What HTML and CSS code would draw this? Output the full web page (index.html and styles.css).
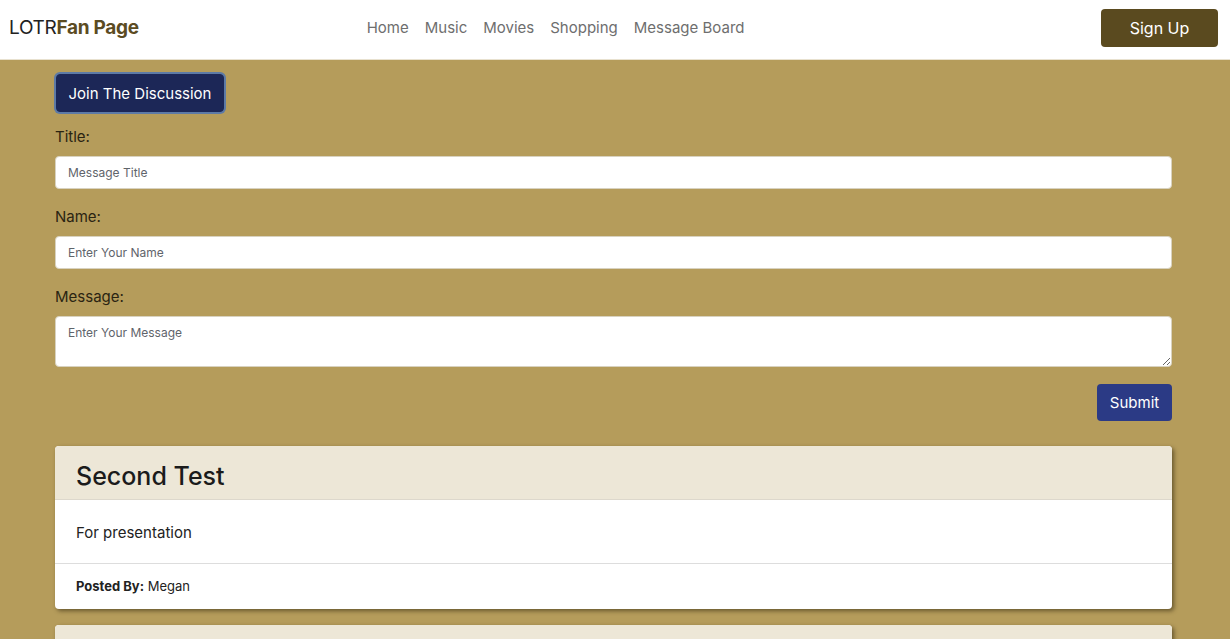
FILE: index.html
```html
<!DOCTYPE html>
<html>
<head>
<meta charset="utf-8">
<link rel="stylesheet" href="styles.css">
</head>
<body>
<nav class="navbar">
  <a class="brand">LOTR<b>Fan Page</b></a>
  <ul class="nav-links">
    <li>Home</li>
    <li>Music</li>
    <li>Movies</li>
    <li>Shopping</li>
    <li>Message Board</li>
  </ul>
  <button class="signup">Sign Up</button>
</nav>
<main class="container">
  <button class="join">Join The Discussion</button>
  <form class="form">
    <label class="label">Title:</label>
    <input class="field" type="text" placeholder="Message Title">
    <label class="label">Name:</label>
    <input class="field" type="text" placeholder="Enter Your Name">
    <label class="label">Message:</label>
    <textarea class="field area" placeholder="Enter Your Message"></textarea>
    <div class="actions"><button type="button" class="submit">Submit</button></div>
  </form>
  <div class="card">
    <div class="card-header">Second Test</div>
    <div class="card-body">For presentation</div>
    <div class="card-footer"><b>Posted By:</b> Megan</div>
  </div>
  <div class="card">
    <div class="card-header"></div>
    <div class="card-body"></div>
    <div class="card-footer"></div>
  </div>
</main>
</body>
</html>
```
FILE: styles.css
```css
* { box-sizing: border-box; }
html, body { margin: 0; padding: 0; }
body {
  background: #b59c5b;
  font-family: Inter, "Liberation Sans", sans-serif;
  color: #212529;
  overflow: hidden;
}
.navbar {
  height: 60px;
  background: #fff;
  border-bottom: 1px solid #e8e1cf;
  display: flex;
  align-items: center;
  padding: 0 12px 4px 9px;
  position: relative;
}
.brand {
  font-size: 19px;
  color: #222;
  letter-spacing: -0.3px;
}
.brand b { color: #5b4b22; font-weight: 700; }
.nav-links {
  list-style: none;
  display: flex;
  gap: 16px;
  margin: 0 0 0 228px;
  padding: 0;
  font-size: 15px;
  color: #6e6e6e;
}
.signup {
  margin-left: auto;
  background: #5a4a1f;
  color: #fff;
  border: none;
  border-radius: 4px;
  width: 117px;
  height: 38px;
  font: 16px Inter, "Liberation Sans", sans-serif;
}
.container {
  width: 1117px;
  margin-left: 55px;
  padding-top: 14px;
}
.join {
  background: #1c2757;
  color: #fff;
  border: 1px solid #1c2757;
  box-shadow: 0 0 0 2px #5d7aa6;
  border-radius: 4px;
  height: 38px;
  padding: 0;
  white-space: nowrap;
  font: 15px Inter, "Liberation Sans", sans-serif;
  margin-left: 1px;
  width: 168px;
}
.form { display: flex; flex-direction: column; }
.label {
  font-size: 15px;
  color: #2a2412;
  margin: 16px 0 10px;
  line-height: 18px;
}
.field {
  height: 33px;
  border: 1px solid #d8d2c0;
  border-radius: 4px;
  background: #fff;
  padding: 0 12px;
  font: 12px Inter, "Liberation Sans", sans-serif;
  color: #495057;
  margin-bottom: 3px;
}
.field::placeholder { color: #5f646b; }
.area { height: 51px; padding-top: 8px; resize: vertical; }
.actions { display: flex; justify-content: flex-end; margin-top: 14px; }
.submit {
  background: #2b3a85;
  color: #fff;
  border: none;
  border-radius: 4px;
  height: 37px;
  width: 75px;
  font: 15px Inter, "Liberation Sans", sans-serif;
}
.card {
  margin-top: 25px;
  background: #fff;
  border-radius: 4px;
  overflow: hidden;
  box-shadow: 2px 2px 4px rgba(40, 30, 10, 0.55);
}
.card + .card { margin-top: 16px; }
.card-header {
  background: #ede7d7;
  height: 54px;
  padding: 15px 21px 0;
  font-size: 25px;
  font-weight: 500;
  color: #1b1b1b;
  border-bottom: 1px solid #ddd8cc;
}
.card-body {
  height: 64px;
  padding: 23px 21px 0;
  font-size: 15px;
  color: #222;
  border-bottom: 1px solid #ddd;
}
.card-footer {
  height: 45px;
  padding: 14px 21px 0;
  font-size: 13px;
  color: #222;
}
.card-footer b { font-weight: 700; }
```
